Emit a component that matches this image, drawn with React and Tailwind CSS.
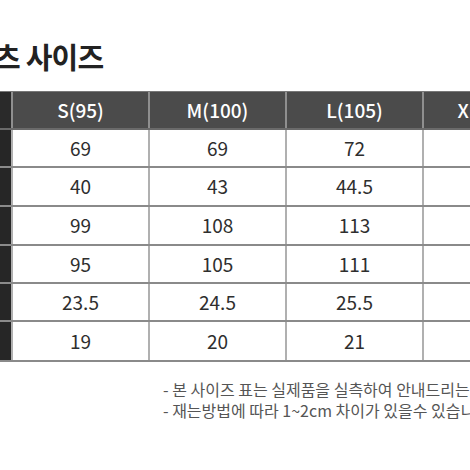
import React from "react";

const font = { fontFamily: '"Noto Sans CJK KR", "Noto Sans", sans-serif' };

const header = ["S(95)", "M(100)", "L(105)", "XL(110)"];
const rows = [
  { h: "h-[38px]", v: ["69", "69", "72", "75"] },
  { h: "h-[39px]", v: ["40", "43", "44.5", "46"] },
  { h: "h-[39px]", v: ["99", "108", "113", "118"] },
  { h: "h-[38px]", v: ["95", "105", "111", "117"] },
  { h: "h-[38px]", v: ["23.5", "24.5", "25.5", "26.5"] },
  { h: "h-[38px]", v: ["19", "20", "21", "22"] },
];

const widths = ["w-[137px]", "w-[137px]", "w-[137px]", "w-[137px]"];

export default function App() {
  return (
    <div className="w-[470px] h-[470px] overflow-hidden bg-white relative" style={font}>
      <div className="pt-[37px] h-[91px]">
        <div className="ml-[-6px] text-[29px] leading-[38px] font-bold text-[#222] tracking-[-0.8px] whitespace-nowrap">
          츠 사이즈
        </div>
      </div>
      <div className="w-[600px] border-b-2 border-[#8a8a8a]">
        <div className="flex h-[39px] border-t border-[#777] border-b-2 border-b-[#6a6a6a] bg-[#4b4b4b]">
          <div className="w-[11px] shrink-0 bg-[#2a2a2a]" />
          {header.map((t, i) => (
            <div
              key={t}
              className={`${widths[i]} shrink-0 border-l-2 border-[#8f8f8f] flex items-center justify-center text-white text-[19px] font-medium`}
            >
              {t}
            </div>
          ))}
        </div>
        {rows.map((r, ri) => (
          <div
            key={ri}
            className={`flex ${r.h} ${ri < rows.length - 1 ? "border-b-2 border-[#8a8a8a]" : ""}`}
          >
            <div className="w-[11px] shrink-0 bg-[#262626]" />
            {r.v.map((t, i) => (
              <div
                key={i}
                className={`${widths[i]} shrink-0 border-l-2 border-[#b0b0b0] flex items-center justify-center text-[#2e2e2e] text-[19px]`}
              >
                {t}
              </div>
            ))}
          </div>
        ))}
      </div>
      <div className="pl-[163px] pt-[17px] text-[16px] leading-[21px] text-[#555] whitespace-nowrap">
        <div>- 본 사이즈 표는 실제품을 실측하여 안내드리는 수치입니다.</div>
        <div>- 재는방법에 따라 1~2cm 차이가 있을수 있습니다.</div>
      </div>
    </div>
  );
}
